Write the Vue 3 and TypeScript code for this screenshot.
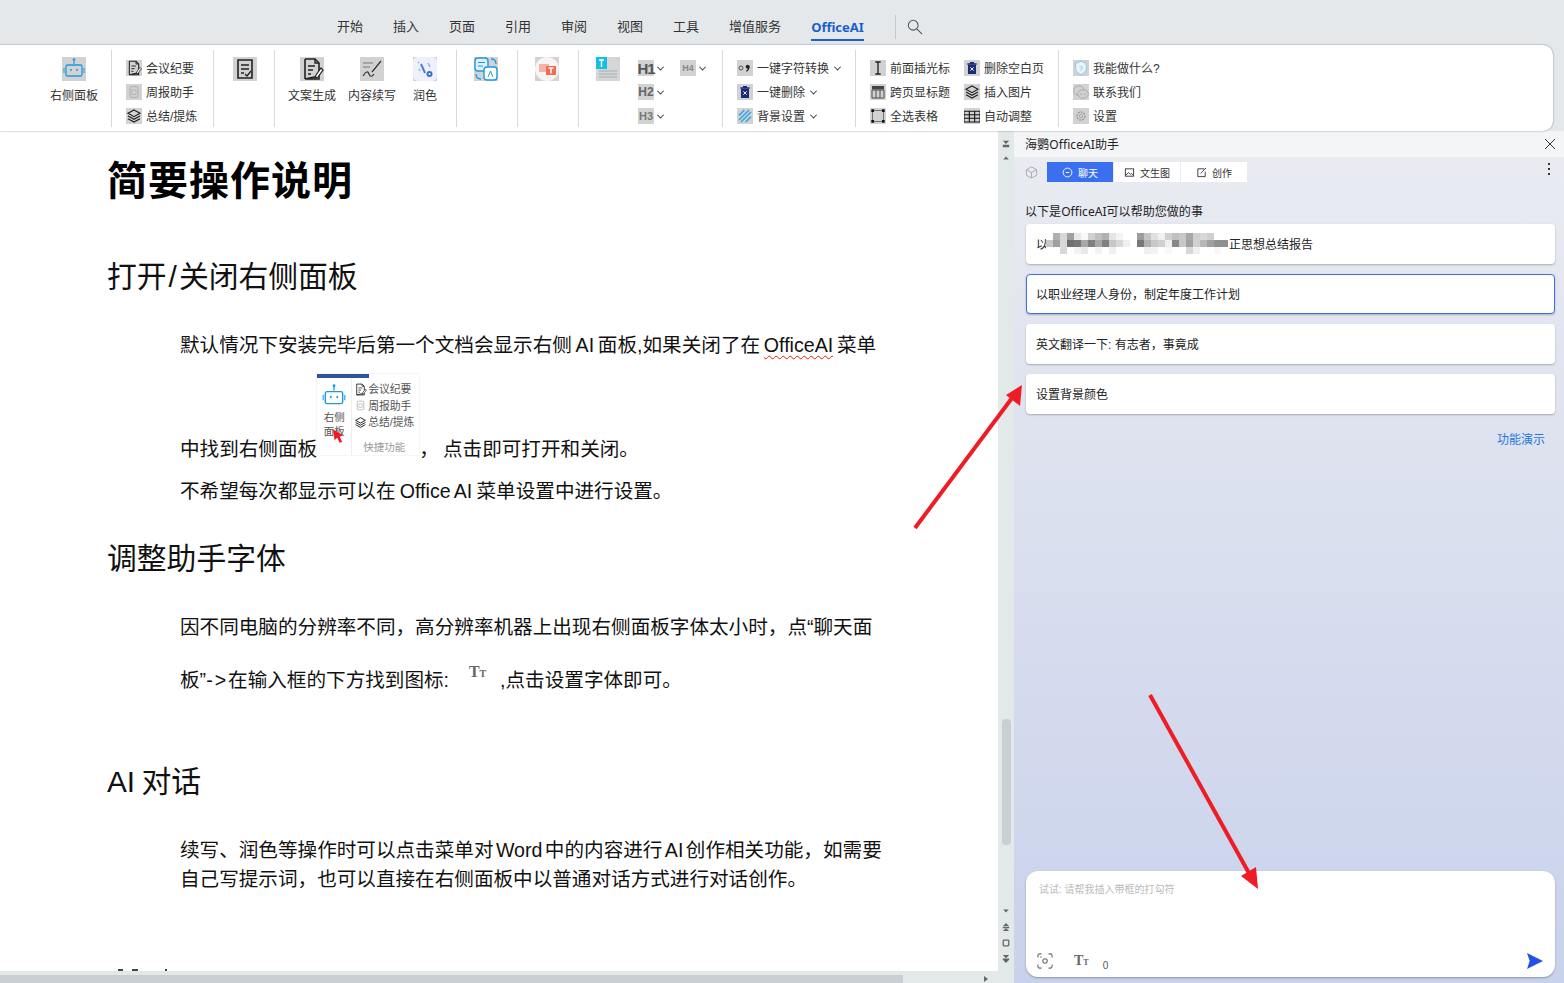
<script setup lang="ts">
const tabs = ['开始', '插入', '页面', '引用', '审阅', '视图', '工具', '增值服务']

const doc = '<path d="M5 2h10l4 4v8M19 19v3H5z" fill="none" stroke="#222" stroke-width="1.6"/><path d="M5 2v20" stroke="#222" stroke-width="1.6"/><path d="M15 2v4h4M8 9h7M8 13h5M8 17h3" fill="none" stroke="#222" stroke-width="1.4"/><path d="M21 11l-5 7-1 3 3-1 5-7z" fill="#fff" stroke="#222" stroke-width="1.2"/>'
const layers = '<path d="M12 3l9 5-9 5-9-5z" fill="none" stroke="#222" stroke-width="1.8"/><path d="M3 12l9 5 9-5M3 16l9 5 9-5" fill="none" stroke="#222" stroke-width="1.8"/>'
const trash = '<path d="M5 6h14M9 4h6" stroke="#1c2a78" stroke-width="2"/><path d="M6 7h12v14H6z" fill="#1c2a78"/><path d="M9.500 11l5 5M14.500 11l-5 5" stroke="#fff" stroke-width="1.400"/>'

const icons: Record<string, string> = {
  robot: '<path d="M12 2v5" stroke="#1a9be0" stroke-width="1.200"/><circle cx="12" cy="2.500" r="1.300" fill="#1a9be0"/><rect x="4" y="8" width="16" height="11" rx="1.500" fill="none" stroke="#1a9be0" stroke-width="1.300"/><path d="M2 11v5M22 11v5" stroke="#1a9be0"/><circle cx="9" cy="13" r="1" fill="#1a9be0"/><circle cx="15" cy="13" r="1" fill="#1a9be0"/>',
  doc,
  week: '<rect x="6" y="4" width="12" height="16" rx="2" fill="none" stroke="#aaa" stroke-width="1.400"/><rect x="9" y="9" width="6" height="7" fill="none" stroke="#aaa"/>',
  layers,
  check: '<path d="M5 3h14v18H5z" fill="none" stroke="#222" stroke-width="1.600"/><path d="M8 8h8M8 12h8M8 16h3" stroke="#222" stroke-width="1.400"/><path d="M12 17l2 2 4-5" fill="none" stroke="#222" stroke-width="1.300"/>',
  write: '<path d="M3 6h10M3 10h7" stroke="#777" stroke-width="1"/><path d="M3 19c3-5 5-5 6-2s3 3 5 0M12 15L21 4" fill="none" stroke="#333" stroke-width="1.200"/>',
  magic: '<rect x="0" y="0" width="24" height="24" rx="5" fill="#eef1fb"/><path d="M8 7l4 9" stroke="#4a7fd6" stroke-width="2"/><circle cx="16.500" cy="17" r="3" fill="#3a6fc8"/><circle cx="16.500" cy="17" r="1" fill="#fff"/><path d="M15 6l2 4M6 12l1 2M5 5l1 1" stroke="#8ab0e8" stroke-width="1.500"/>',
  translate: '<rect x="1" y="1" width="13" height="13" rx="3" fill="#dff0fb" stroke="#1f9ae0" stroke-width="1.400"/><rect x="10" y="10" width="13" height="13" rx="3" fill="#fff" stroke="#1f9ae0" stroke-width="1.400"/><path d="M4 5.500h7M4 9h5" stroke="#1f9ae0"/><path d="M14 20l2.500-6 2.500 6" fill="none" stroke="#1f9ae0"/><path d="M17 2c3 0 5 2 5 5M2 17c0 3 2 5 5 5" fill="none" stroke="#1f9ae0" stroke-width="1.400"/>',
  ppt: '<circle cx="12" cy="12" r="12" fill="#f8f4f4"/><rect x="4" y="7" width="10" height="8" fill="#f6b4a8"/><rect x="11" y="9" width="10" height="9" fill="#f26a4f"/><path d="M13.500 11h5M16 11v5.500" stroke="#fff" stroke-width="1.500"/>',
  tdoc: '<path d="M0 0h17l7 7v17H0z" fill="#d4d6d8"/><path d="M3 14h18M3 17h18M3 20h18" stroke="#aaa"/><rect x="0" y="0" width="11" height="12" fill="#16c0dc"/><path d="M3 3h5M5.500 3v7" stroke="#fff" stroke-width="1.400"/>',
  quote: '<circle cx="6" cy="12" r="3" fill="none" stroke="#333" stroke-width="1.200"/><circle cx="16" cy="10" r="3" fill="#222"/><path d="M18 10c0 4-2 6-4 7" fill="none" stroke="#222" stroke-width="1.600"/>',
  trash,
  stripes: '<path d="M3 11l8-8M3 18L18 3M6 21L21 6M13 21l8-8" stroke="#35a8e6" stroke-width="2.400"/>',
  cursor: '<path d="M12 3v18M8 3h8M8 21h8" stroke="#222" stroke-width="2"/>',
  cols: '<rect x="3" y="3" width="18" height="5" fill="#444"/><path d="M3 9h18v12H3zM9 9v12M15 9v12" fill="none" stroke="#444" stroke-width="1.400"/>',
  selectAll: '<rect x="4" y="4" width="16" height="16" fill="none" stroke="#444"/><path d="M2 2h4v4H2zM18 2h4v4h-4zM2 18h4v4H2zM18 18h4v4h-4z" fill="#111"/>',
  table: '<path d="M0 5h24v16H0zM0 10h24M0 15.500h24M8 5v16M16 5v16" fill="none" stroke="#111" stroke-width="1.600"/>',
  help: '<path d="M12 2l8 3v8c0 4-4 7-8 9-4-2-8-5-8-9V5z" fill="#e8f4fb" stroke="#7cc0e4" stroke-width="1.200"/><text x="9" y="16" font-size="10" fill="#7cc0e4" font-family="Liberation Sans">?</text>',
  wechat: '<ellipse cx="9" cy="10" rx="8" ry="7" fill="none" stroke="#999"/><ellipse cx="15" cy="15" rx="8" ry="6.500" fill="#d0d0d0" stroke="#999"/><circle cx="12" cy="15" r=".8" fill="#888"/><circle cx="18" cy="15" r=".8" fill="#888"/>',
  gear: '<circle cx="12" cy="12" r="6" fill="none" stroke="#999" stroke-width="2" stroke-dasharray="3 1.500"/><circle cx="12" cy="12" r="2.500" fill="none" stroke="#999"/>',
}

interface Row { icon: string; label: string; arrow?: boolean }
const group2: Row[] = [
  { icon: 'doc', label: '会议纪要' },
  { icon: 'week', label: '周报助手' },
  { icon: 'layers', label: '总结/提炼' },
]
const group8: Row[] = [
  { icon: 'quote', label: '一键字符转换', arrow: true },
  { icon: 'trash', label: '一键删除', arrow: true },
  { icon: 'stripes', label: '背景设置', arrow: true },
]
const group9a: Row[] = [
  { icon: 'cursor', label: '前面插光标' },
  { icon: 'cols', label: '跨页显标题' },
  { icon: 'selectAll', label: '全选表格' },
]
const group9b: Row[] = [
  { icon: 'trash', label: '删除空白页' },
  { icon: 'layers', label: '插入图片' },
  { icon: 'table', label: '自动调整' },
]
const group10: Row[] = [
  { icon: 'help', label: '我能做什么?' },
  { icon: 'wechat', label: '联系我们' },
  { icon: 'gear', label: '设置' },
]

const mosaic = [
  'fff b0 d8 a0 e8 f8 d0 c0 b0 e4 f4 fff fff 9c c4 e0 f0 d0 c0 c8 a8 d0 d8 d0 fff fff',
  'c8 a0 d8 70 78 a8 80 a8 80 c8 d8 f0 fff 78 b0 c8 d0 f0 88 c8 a0 d0 b8 a0 90 90',
  'fff fff d8 fff f4 e8 fff f4 fff f0 fff fff fff fff f0 f4 fff f8 fff fff d8 f0 fff fff f8 fff',
].map((row) => row.split(' ').map((v) => (v.length === 3 ? '#ffffff' : `#${v}${v}${v}`)))

const cards = [
  { text: '以职业经理人身份，制定年度工作计划', active: true },
  { text: '英文翻译一下: 有志者，事竟成', active: false },
  { text: '设置背景颜色', active: false },
]
</script>

<template>
  <div class="page">
    <header class="topbar">
      <span v-for="t in tabs" :key="t" class="tab">{{ t }}</span>
      <span class="tab tab-active">OfficeAI</span>
      <span class="top-sep"></span>
      <svg class="search" viewBox="0 0 18 18"><circle cx="7" cy="7" r="5.500" fill="none" stroke="#555" stroke-width="1.200"/><path d="M11 11l6 6" stroke="#555" stroke-width="1.200"/></svg>
    </header>

    <section class="ribbon">
      <div class="grp g1">
        <div class="big"><svg class="ico24" viewBox="0 0 24 24" v-html="icons.robot"></svg><span>右侧面板</span></div>
      </div>
      <div class="grp g2">
        <div class="rows">
          <div v-for="r in group2" :key="r.label" class="row"><svg class="ico16" viewBox="0 0 24 24" v-html="icons[r.icon]"></svg><span>{{ r.label }}</span></div>
        </div>
      </div>
      <div class="grp g3"><svg class="ico24" viewBox="0 0 24 24" v-html="icons.check"></svg></div>
      <div class="grp g4">
        <div class="big b1"><svg class="ico24" viewBox="0 0 24 24" v-html="icons.doc"></svg><span>文案生成</span></div>
        <div class="big b2"><svg class="ico24" viewBox="0 0 24 24" v-html="icons.write"></svg><span>内容续写</span></div>
        <div class="big b3"><svg class="ico24" viewBox="0 0 24 24" v-html="icons.magic"></svg><span>润色</span></div>
      </div>
      <div class="grp g5"><svg class="ico24" viewBox="0 0 24 24" v-html="icons.translate"></svg></div>
      <div class="grp g5"><svg class="ico24" viewBox="0 0 24 24" v-html="icons.ppt"></svg></div>
      <div class="grp g7">
        <svg class="ico24" viewBox="0 0 24 24" v-html="icons.tdoc"></svg>
        <div class="hcol hcol1">
          <div class="h-row"><b class="hbox h1b">H1</b><i class="caret"></i></div>
          <div class="h-row"><b class="hbox h2b">H2</b><i class="caret"></i></div>
          <div class="h-row"><b class="hbox h3b">H3</b><i class="caret"></i></div>
        </div>
        <div class="hcol">
          <div class="h-row"><b class="hbox h4b">H4</b><i class="caret"></i></div>
        </div>
      </div>
      <div class="grp g8">
        <div class="rows">
          <div v-for="r in group8" :key="r.label" class="row"><svg class="ico16" viewBox="0 0 24 24" v-html="icons[r.icon]"></svg><span>{{ r.label }}</span><i class="caret"></i></div>
        </div>
      </div>
      <div class="grp g9">
        <div class="rows r9a">
          <div v-for="r in group9a" :key="r.label" class="row"><svg class="ico16" viewBox="0 0 24 24" v-html="icons[r.icon]"></svg><span>{{ r.label }}</span></div>
        </div>
        <div class="rows">
          <div v-for="r in group9b" :key="r.label" class="row"><svg class="ico16" viewBox="0 0 24 24" v-html="icons[r.icon]"></svg><span>{{ r.label }}</span></div>
        </div>
      </div>
      <div class="g10">
        <div class="rows">
          <div v-for="r in group10" :key="r.label" class="row"><svg class="ico16" viewBox="0 0 24 24" v-html="icons[r.icon]"></svg><span>{{ r.label }}</span></div>
        </div>
      </div>
    </section>

    <main class="main">
      <div class="docwrap">
        <article class="doc">
          <h1>简要操作说明</h1>
          <h2 class="h-first">打开<span class="slash">/</span>关闭右侧面板</h2>
          <p class="p1">默认情况下安装完毕后第一个文档会显示右侧 AI 面板,如果关闭了在 <span class="wavy">OfficeAI</span> 菜单</p>
          <p class="p2">中找到右侧面板<span class="shot">
            <span class="shot-bar"></span>
            <span class="shot-body">
              <span class="shot-left">
                <svg class="shot-robot" viewBox="0 0 24 24" v-html="icons.robot"></svg>
                <span>右侧</span><span>面板</span>
              </span>
              <span class="shot-right">
                <span class="shot-row"><svg viewBox="0 0 24 24" v-html="icons.doc"></svg>会议纪要</span>
                <span class="shot-row"><svg viewBox="0 0 24 24" v-html="icons.week"></svg>周报助手</span>
                <span class="shot-row"><svg viewBox="0 0 24 24" v-html="icons.layers"></svg>总结/提炼</span>
                <span class="shot-cap">快捷功能</span>
              </span>
            </span>
            <svg class="shot-cursor" viewBox="0 0 14 18"><path d="M1 1l12 7-4 2 3 6-3 1-3-6-3 3z" fill="#f01c24"/></svg>
          </span>， 点击即可打开和关闭。</p>
          <p class="p3">不希望每次都显示可以在 Office AI 菜单设置中进行设置。</p>
          <h2 class="h-second">调整助手字体</h2>
          <p class="p4">因不同电脑的分辨率不同，高分辨率机器上出现右侧面板字体太小时，点“聊天面</p>
          <p class="p5">板”<span class="dash">-&gt;</span>在输入框的下方找到图标:<span class="tt-inline">T<small>T</small></span>,点击设置字体即可。</p>
          <h2 class="h-third">AI 对话</h2>
          <p class="p6">续写、润色等操作时可以点击菜单对 Word 中的内容进行 AI 创作相关功能，如需要<br>自己写提示词，也可以直接在右侧面板中以普通对话方式进行对话创作。</p>
          <div class="cutoff"><i class="c1"></i><i class="c2"></i><i class="c3"></i></div>
        </article>
        <div class="hscroll">
          <div class="hthumb"></div>
          <svg class="harrow" viewBox="0 0 6 6"><path d="M1 0l4 3-4 3z" fill="#666"/></svg>
        </div>
      </div>

      <aside class="vscroll">
        <div class="vtop">
          <svg viewBox="0 0 10 10"><path d="M1 1h8L5 5zM1 6h8v3H1z" fill="#666"/></svg>
          <svg viewBox="0 0 10 10"><path d="M5 3l3.500 4h-7z" fill="#666"/></svg>
        </div>
        <div class="vthumb"></div>
        <div class="vbottom">
          <svg viewBox="0 0 10 10"><path d="M5 7L1.500 3h7z" fill="#666"/></svg>
          <svg viewBox="0 0 10 10"><path d="M5 0l4 4H1zM1 5h8v1.500H1zM5 6.500l4 3.500H1z" fill="#666"/></svg>
          <svg viewBox="0 0 10 10"><rect x="1.500" y="1.500" width="7" height="7" rx="1" fill="none" stroke="#666" stroke-width="1.600"/></svg>
          <svg viewBox="0 0 10 10"><path d="M1 0h8L5 4zM1 4.500h8V6H1zM1 6h8l-4 4z" fill="#666"/></svg>
        </div>
      </aside>

      <section class="panel">
        <div class="ptitle">
          <span>海鹦OfficeAI助手</span>
          <svg class="close" viewBox="0 0 10 10"><path d="M0 0l10 10M10 0L0 10" stroke="#333" stroke-width="1"/></svg>
        </div>
        <div class="pbody">
          <div class="ptabs">
            <svg class="cube" viewBox="0 0 14 14"><path d="M7 1l5.500 3v6L7 13l-5.500-3V4zM1.500 4L7 7l5.500-3M7 7v6" fill="none" stroke="#aaa"/></svg>
            <span class="ptab on">
              <svg viewBox="0 0 12 12"><circle cx="6" cy="6" r="4.800" fill="none" stroke="#fff"/><path d="M4 6h4" stroke="#fff"/></svg>聊天
            </span>
            <span class="ptab">
              <svg viewBox="0 0 12 12"><rect x="1.500" y="2" width="9" height="8" fill="none" stroke="#333"/><path d="M2 9l3-3 2 2 1-1 2 2" fill="none" stroke="#333"/></svg>文生图
            </span>
            <span class="ptab">
              <svg viewBox="0 0 12 12"><path d="M9 2H2v8.500h8V5" fill="none" stroke="#333"/><path d="M5 7l6-6" stroke="#333"/></svg>创作
            </span>
            <span class="dots"><i></i><i></i><i></i></span>
          </div>

          <div class="intro">以下是OfficeAI可以帮助您做的事</div>

          <div class="card">
            <span>以</span>
            <span class="mosaic">
              <span v-for="(row, i) in mosaic" :key="i" class="mrow">
                <i v-for="(c, j) in row" :key="j" :style="{ background: c }"></i>
              </span>
            </span>
            <span>正思想总结报告</span>
          </div>
          <div v-for="c in cards" :key="c.text" class="card" :class="{ active: c.active }">{{ c.text }}</div>

          <a class="demo">功能演示</a>

          <div class="inputbox">
            <div class="ph">试试: 请帮我插入带框的打勾符</div>
            <div class="input-foot">
              <svg class="scan" viewBox="0 0 18 18"><path d="M1 5V3a2 2 0 0 1 2-2h2M13 1h2a2 2 0 0 1 2 2v2M17 13v2a2 2 0 0 1-2 2h-2M5 17H3a2 2 0 0 1-2-2v-2" fill="none" stroke="#666" stroke-width="1.200"/><circle cx="9" cy="9" r="2.500" fill="none" stroke="#666" stroke-width="1.200"/><circle cx="4.500" cy="4.500" r=".8" fill="#666"/></svg>
              <span class="tt">T<small>T</small></span>
              <span class="count">0</span>
              <svg class="send" viewBox="0 0 18 18"><path d="M0 0l18 9-18 9 3-9z" fill="#2450e8"/></svg>
            </div>
          </div>
        </div>
      </section>
    </main>

    <svg class="arrows" viewBox="0 0 1564 983">
      <path d="M915 528L1012 398" stroke="#f01c24" stroke-width="4"/>
      <path d="M1022 385l-16 10 14 11z" fill="#f01c24"/>
      <path d="M1150 695L1250 875" stroke="#f01c24" stroke-width="4"/>
      <path d="M1258 889l-17-13 15-9z" fill="#f01c24"/>
    </svg>
  </div>
</template>

<style>
html, body { margin: 0; padding: 0; overflow: hidden; }
</style>

<style scoped>
.page {
  position: relative;
  width: 1564px;
  height: 983px;
  overflow: hidden;
  background: #e4e8ea;
  font-family: "Liberation Sans", "Noto Sans CJK SC", sans-serif;
  color: #333;
  display: flex;
  flex-direction: column;
}
.topbar {
  height: 45px;
  flex: none;
  display: flex;
  align-items: center;
  gap: 30px;
  padding-left: 337px;
  padding-top: 9px;
  box-sizing: border-box;
  font-size: 13px;
}
.tab { line-height: 20px; color: #333; white-space: nowrap; }
.tab-active {
  color: #1a5fd0;
  font-weight: 700;
  position: relative;
  width: 54px;
  font-family: "Noto Sans", sans-serif;
}
.tab-active::after {
  content: "";
  position: absolute;
  left: 0;
  right: 1px;
  bottom: -4px;
  height: 2px;
  background: #1a5fd0;
}
.top-sep { width: 1px; height: 24px; background: #c4c8ca; margin-right: -19px; }
.search { width: 16px; height: 16px; }

.ribbon {
  flex: none;
  height: 86px;
  width: 1553px;
  background: #fff;
  border-radius: 0 10px 10px 0;
  box-shadow: 0 0 2px rgba(0, 0, 0, .45);
  display: flex;
  align-items: stretch;
  padding: 5px 0 4px;
  box-sizing: border-box;
  position: relative;
  z-index: 2;
  font-size: 12px;
  white-space: nowrap;
}
.grp { border-right: 1px solid #d8d8d8; box-sizing: border-box; display: flex; flex: none; }
.g1 { width: 112px; justify-content: flex-end; padding-right: 13px; }
.g2 { width: 102px; padding-left: 14px; }
.g3 { width: 61px; padding-left: 19px; }
.g4 { width: 182px; }
.g5 { width: 61px; padding-left: 17px; }
.g7 { width: 144px; padding-left: 17px; }
.g8 { width: 133px; padding-left: 14px; }
.g9 { width: 203px; padding-left: 14px; }
.g10 { padding-left: 14px; }
.ico24 { width: 24px; height: 24px; background: #d2d2d2; flex: none; margin-top: 7px; }
.ico16 { width: 16px; height: 16px; background: #d2d2d2; flex: none; }
.big { display: flex; flex-direction: column; align-items: center; }
.big span { margin-top: 6px; line-height: 18px; }
.b1 { width: 48px; margin-left: 13px; }
.b2 { width: 48px; margin-left: 12px; }
.b3 { width: 24px; margin-left: 17px; }
.rows { display: flex; flex-direction: column; padding-top: 8px; gap: 4px; }
.row { display: flex; align-items: center; gap: 4px; height: 20px; }
.row span { padding-bottom: 2px; }
.r9a { width: 94px; }
.caret {
  width: 4px;
  height: 4px;
  border-right: 1.500px solid #333;
  border-bottom: 1.500px solid #333;
  transform: rotate(45deg) translate(-1px, -1px);
  margin-left: 2px;
  display: inline-block;
  flex: none;
}
.hcol { display: flex; flex-direction: column; gap: 8px; padding-top: 10px; }
.hcol1 { margin-left: 18px; width: 42px; }
.h-row { display: flex; align-items: center; gap: 2px; height: 16px; }
.hbox {
  width: 16px;
  height: 16px;
  background: #d2d2d2;
  color: #555;
  display: flex;
  align-items: center;
  justify-content: center;
  font-family: "Liberation Sans", sans-serif;
  font-weight: 700;
}
.h1b { font-size: 15px; letter-spacing: -1px; }
.h2b { font-size: 12px; color: #666; }
.h3b { font-size: 11px; color: #777; }
.h4b { font-size: 9px; color: #888; }

.main { flex: 1; min-height: 0; display: flex; background: #fff; }
.docwrap {
  width: 998px;
  flex: none;
  display: flex;
  flex-direction: column;
  min-height: 0;
}
.doc {
  flex: 1;
  min-height: 0;
  overflow: hidden;
  padding: 25px 110px 0 107px;
  box-sizing: border-box;
  color: #111;
  font-size: 19.600px;
}
h1 { margin: 0; font-size: 40px; line-height: 50px; font-weight: 700; color: #000; letter-spacing: 1px; }
h2 { margin: 0; font-size: 29.800px; line-height: 40px; font-weight: 400; color: #111; word-spacing: -2px; }
.slash { padding: 0 2px; }
p { margin: 0; line-height: 30px; padding-left: 73px; white-space: nowrap; word-spacing: -1.200px; }
.h-first { margin-top: 51px; }
.p1 { margin-top: 33px; word-spacing: -1.700px; }
.wavy { text-decoration: underline wavy #e02020 1px; text-underline-offset: 3px; }
.p2 { margin-top: 14px; }
.p3 { margin-top: 12px; }
.h-second { margin-top: 33px; }
.p4 { margin-top: 33px; }
.p5 { margin-top: 23px; }
.dash { letter-spacing: 2px; }
.h-third { margin-top: 63px; }
.p6 { margin-top: 34px; line-height: 29px; word-spacing: -3px; }
.cutoff { display: flex; height: 2px; margin-top: 75px; padding-left: 11px; }
.cutoff i { display: block; height: 2px; background: #444; }
.c1 { width: 5px; }
.c2 { width: 6px; margin-left: 9px; }
.c3 { width: 2px; margin-left: 27px; }
.shot {
  display: inline-block;
  overflow: hidden;
  position: relative;
  width: 102px;
  height: 81px;
  vertical-align: 1px;
  background: #fff;
  box-shadow: 0 0 2px rgba(0, 0, 0, .12);
  color: #555;
  font-size: 10.500px;
  line-height: 16px;
}
.shot-bar { display: block; width: 52px; height: 4px; background: #2b579a; }
.shot-body { display: flex; height: 77px; }
.shot-left { width: 35px; display: flex; flex-direction: column; align-items: center; border-right: 1px solid #eee; padding-top: 5px; line-height: 14px; box-sizing: border-box; }
.shot-robot { width: 26px; height: 26px; margin-bottom: 1px; flex: none; }
.shot-right { flex: 1; display: flex; flex-direction: column; padding: 3px 0 0 2px; white-space: nowrap; }
.shot-row { display: flex; align-items: center; gap: 1px; height: 16.500px; font-size: 10.800px; }
.shot-row svg { width: 13px; height: 13px; flex: none; }
.shot-cap { margin-top: 8px; padding-left: 9px; color: #999; font-size: 10.500px; }
.shot-cursor { position: absolute; left: 15px; top: 54px; width: 12px; height: 16px; }
.tt-inline, .tt { font-family: "Liberation Serif", serif; color: #666; }
.tt-inline { display: inline-block; width: 51px; box-sizing: border-box; padding-left: 6px; text-align: center; position: relative; top: -10px; font-size: 16px; font-weight: 700; }
.tt-inline small { font-size: 10px; }

.hscroll {
  height: 12px;
  flex: none;
  background: #e3e8e8;
  position: relative;
}
.hthumb { position: absolute; left: 0; bottom: 0; width: 903px; height: 8px; background: #c9cfd2; }
.harrow { position: absolute; left: 983px; top: 5px; width: 6px; height: 6px; }

.vscroll {
  width: 16px;
  flex: none;
  background: #e3e8e8;
  display: flex;
  flex-direction: column;
  align-items: center;
}
.vscroll svg { width: 8px; height: 8px; display: block; }
.vtop { padding-top: 9px; display: flex; flex-direction: column; gap: 6px; height: 580px; box-sizing: border-box; }
.vthumb { width: 9px; height: 126px; background: #c9cfd2; border-radius: 4px; margin-top: 8px; }
.vbottom { margin-top: 62px; display: flex; flex-direction: column; gap: 8px; }

.panel { flex: 1; min-width: 0; display: flex; flex-direction: column; font-size: 12px; color: #222; }
.ptitle {
  height: 26px;
  flex: none;
  background: #f4f5f7;
  display: flex;
  align-items: center;
  justify-content: space-between;
  padding: 0 9px 0 11px;
  box-sizing: border-box;
  font-family: "Noto Sans", "Noto Sans CJK SC", sans-serif;
  letter-spacing: .1px;
}
.close { width: 10px; height: 10px; }
.pbody {
  flex: 1;
  min-height: 0;
  background: linear-gradient(180deg, #e9ebf1 0%, #c9d2ec 100%);
  padding: 5px 9px 6px 11px;
  display: flex;
  flex-direction: column;
}
.ptabs { display: flex; align-items: center; height: 20px; position: relative; font-size: 10px; flex: none; }
.cube { width: 13px; height: 13px; margin-right: 9px; }
.ptab {
  width: 66px;
  height: 20px;
  margin-right: 1px;
  background: #fff;
  display: flex;
  align-items: center;
  justify-content: center;
  gap: 5px;
  color: #333;
}
.ptab svg { width: 11px; height: 11px; }
.ptab.on { background: #3a6ff0; color: #fff; }
.dots { position: absolute; right: 5px; top: 1px; display: flex; flex-direction: column; gap: 3px; }
.dots i { width: 2px; height: 2px; background: #333; display: block; }
.intro {
  margin-top: 19px;
  line-height: 18px;
  flex: none;
  padding-top: 2px;
  font-family: "Noto Sans", "Noto Sans CJK SC", sans-serif;
  letter-spacing: .05px;
}
.card {
  margin: 3px 0 7px 1px;
  height: 40px;
  flex: none;
  box-sizing: border-box;
  background: #fff;
  border-radius: 4px;
  box-shadow: 0 1px 2px rgba(0, 0, 0, .25);
  display: flex;
  align-items: center;
  padding: 0 0 2px 9px;
  font-size: 12px;
  color: #222;
  border: 1px solid transparent;
}
.card.active { border-color: #3a6ff0; }
.mosaic { display: inline-flex; flex-direction: column; width: 183px; margin-left: -2px; }
.mrow { display: flex; height: 7px; }
.mrow i { width: 7px; height: 7px; display: block; flex: none; }
.demo { align-self: flex-end; color: #1f7ae0; margin: 9px 10px 0 0; line-height: 20px; }
.inputbox {
  margin: auto 0 0 1px;
  height: 106px;
  flex: none;
  background: #fff;
  border-radius: 12px;
  box-shadow: 0 1px 2px rgba(0, 0, 0, .3);
  box-sizing: border-box;
  padding: 12px 12px 6px 13px;
  display: flex;
  flex-direction: column;
  justify-content: space-between;
}
.ph { color: #bbb; font-size: 10px; line-height: 14px; }
.input-foot { display: flex; align-items: center; height: 20px; }
.scan { width: 16px; height: 16px; margin-left: -2px; }
.tt { font-size: 14px; margin-left: 21px; font-weight: 700; }
.tt small { font-size: 8px; }
.count { font-family: "Liberation Sans", sans-serif; font-size: 10px; margin-left: 14px; margin-top: 9px; color: #555; }
.send { width: 16px; height: 16px; margin-left: auto; }

.arrows { position: absolute; left: 0; top: 0; width: 1564px; height: 983px; pointer-events: none; z-index: 5; }
</style>
